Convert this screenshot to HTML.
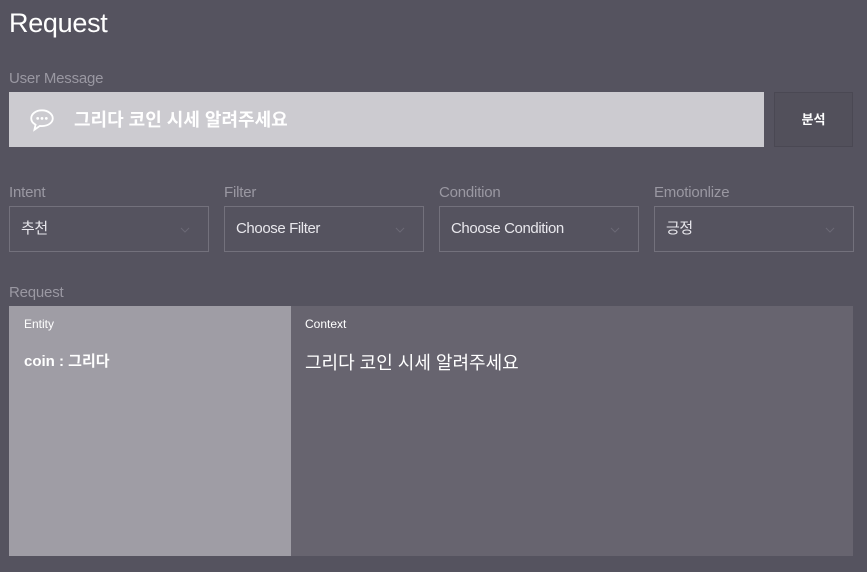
<!DOCTYPE html>
<html><head><meta charset="utf-8"><style>
*{margin:0;padding:0;box-sizing:border-box}
body{width:867px;height:572px;background:#55535f;font-family:"Liberation Sans","Noto Sans CJK KR",sans-serif;position:relative;overflow:hidden;color:#fff}
.a{position:absolute}
.lbl{color:#9a98a2;font-size:15px;letter-spacing:-0.2px}
.sel{position:absolute;top:206px;width:200px;height:46px;border:1px solid #73717c;color:#e8e7ec;font-size:15px;line-height:44px;padding-left:11px;letter-spacing:-0.4px}
.sel svg{position:absolute;right:18px;top:20px}
</style></head><body>
<div class="a" style="left:9px;top:8px;font-size:27px;color:#fff;letter-spacing:-0.3px">Request</div>
<div class="a lbl" style="left:9px;top:70px">User Message</div>
<div class="a" style="left:9px;top:92px;width:755px;height:55px;background:#cccbd0"></div>
<svg class="a" style="left:28px;top:107px" width="28" height="26" viewBox="0 0 26 24"><path d="M13 3C7 3 3 6.5 3 10.5c0 2.5 1.5 4.5 4 5.8L6 21l5-3.5c.7.1 1.3.1 2 .1 6 0 10-3.4 10-7.1S19 3 13 3z" fill="none" stroke="#fff" stroke-width="1.7"/><circle cx="9" cy="10.5" r="1.3" fill="#fff"/><circle cx="13" cy="10.5" r="1.3" fill="#fff"/><circle cx="17" cy="10.5" r="1.3" fill="#fff"/></svg>
<div class="a" style="left:74px;top:106px;font-size:18px;font-weight:bold;color:#fff">그리다 코인 시세 알려주세요</div>
<div class="a" style="left:774px;top:92px;width:79px;height:55px;background:#52505b;border:1px solid #4a4853;font-size:13px;font-weight:bold;text-align:center;line-height:53px">분석</div>
<div class="a lbl" style="left:9px;top:184px">Intent</div>
<div class="a lbl" style="left:224px;top:184px">Filter</div>
<div class="a lbl" style="left:439px;top:184px">Condition</div>
<div class="a lbl" style="left:654px;top:184px">Emotionlize</div>
<div class="sel" style="left:9px">추천<svg width="10" height="6"><path d="M1 1l4 4 4-4" fill="none" stroke="#6b6975" stroke-width="1"/></svg></div>
<div class="sel" style="left:224px">Choose Filter<svg width="10" height="6"><path d="M1 1l4 4 4-4" fill="none" stroke="#6b6975" stroke-width="1"/></svg></div>
<div class="sel" style="left:439px">Choose Condition<svg width="10" height="6"><path d="M1 1l4 4 4-4" fill="none" stroke="#6b6975" stroke-width="1"/></svg></div>
<div class="sel" style="left:654px">긍정<svg width="10" height="6"><path d="M1 1l4 4 4-4" fill="none" stroke="#6b6975" stroke-width="1"/></svg></div>
<div class="a lbl" style="left:9px;top:284px">Request</div>
<div class="a" style="left:9px;top:306px;width:282px;height:250px;background:#9f9da5"></div>
<div class="a" style="left:291px;top:306px;width:562px;height:250px;background:#67646f"></div>
<div class="a" style="left:24px;top:317px;font-size:12px">Entity</div>
<div class="a" style="left:24px;top:350px;font-size:15px;font-weight:bold">coin : 그리다</div>
<div class="a" style="left:305px;top:317px;font-size:12px">Context</div>
<div class="a" style="left:305px;top:349px;font-size:18px">그리다 코인 시세 알려주세요</div>
</body></html>
